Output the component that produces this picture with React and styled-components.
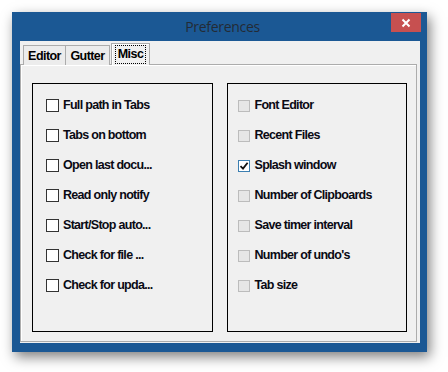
import React from 'react';
import styled, { createGlobalStyle, css } from 'styled-components';

const GlobalStyle = createGlobalStyle`
  html, body {
    margin: 0;
    padding: 0;
    background: #ffffff;
  }
  body {
    font-family: "Liberation Sans", Arial, sans-serif;
  }
`;

const Page = styled.div`
  width: 448px;
  height: 372px;
  padding: 12px 0 0 12px;
  box-sizing: border-box;
`;

const Window = styled.div`
  width: 415px;
  height: 340px;
  background: #1b5894;
  box-sizing: border-box;
  padding: 0 7px 9px 8px;
  display: flex;
  flex-direction: column;
  box-shadow: 3px 5px 12px rgba(0, 0, 0, 0.5);
`;

const TitleBar = styled.div`
  height: 29px;
  display: flex;
  align-items: flex-start;
  margin: 0 -1px 0 -2px;
`;

const Spacer = styled.div`
  width: 32px;
  margin-left: 4px;
`;

const Title = styled.div`
  flex: 1;
  text-align: center;
  font-family: "Open Sans", "Noto Sans", sans-serif;
  font-size: 14px;
  letter-spacing: -0.3px;
  color: #232b35;
  line-height: 29px;
`;

const CloseButton = styled.div`
  width: 30px;
  height: 19px;
  margin-top: 1px;
  background: #c75050;
  display: flex;
  align-items: center;
  justify-content: center;
`;

const Client = styled.div`
  flex: 1;
  background: #f0f0f0;
  display: flex;
  flex-direction: column;
  padding: 2px 3px 1px 0;
`;

const TabStrip = styled.div`
  display: flex;
  align-items: flex-end;
  padding-left: 3px;
  height: 22px;
  position: relative;
  z-index: 1;
  margin-bottom: -1px;
`;

const Tab = styled.div`
  box-sizing: border-box;
  height: 20px;
  border: 1px solid #acacac;
  border-bottom: none;
  border-left-width: ${({ first }) => (first ? 1 : 0)}px;
  background: #ececec;
  font-size: 12.5px;
  font-weight: bold;
  letter-spacing: -0.55px;
  color: #000;
  display: flex;
  align-items: center;
  justify-content: center;
  width: ${({ w }) => w}px;
  ${({ active }) =>
    active &&
    css`
      height: 22px;
      border-left-width: 1px;
      background: #f0f0f0;
      box-shadow: inset 1px 1px 0 #ffffff;
      margin-left: 1px;
      padding-bottom: 1px;
    `}
`;

const Focus = styled.span`
  border: 1px dotted #000;
  padding: 1px 2px 2px 2px;
  line-height: 14px;
`;

const Panel = styled.div`
  flex: 1;
  border: 1px solid #acacac;
  box-shadow: inset 1px 1px 0 #ffffff;
  display: flex;
  gap: 14px;
  padding: 18px 9px 9px 11px;
`;

const Group = styled.div`
  width: 181px;
  box-sizing: border-box;
  border: 1px solid #000;
  display: flex;
  flex-direction: column;
  gap: 17px;
  padding: 15px 0 0 ${({ inset }) => inset}px;
`;

const Row = styled.div`
  display: flex;
  align-items: center;
  height: 13px;
  gap: ${({ gap }) => gap}px;
`;

const Box = styled.div`
  box-sizing: border-box;
  width: ${({ size }) => size}px;
  height: ${({ size }) => size}px;
  border: 1px solid ${({ disabled }) => (disabled ? '#bcbcbc' : '#333333')};
  background: ${({ disabled }) => (disabled ? '#e6e6e6' : '#ffffff')};
  display: flex;
  align-items: center;
  justify-content: center;
  ${({ checked }) =>
    checked &&
    css`
      border-color: #3c7fb1;
      background: #ffffff;
    `}
`;

const Label = styled.span`
  font-size: 12.5px;
  font-weight: bold;
  letter-spacing: -0.7px;
  color: #0a0a14;
  line-height: 13px;
  white-space: nowrap;
`;

const left = [
  'Full path in Tabs',
  'Tabs on bottom',
  'Open last docu...',
  'Read only notify',
  'Start/Stop auto...',
  'Check for file ...',
  'Check for upda...',
];

const right = [
  ['Font Editor', false],
  ['Recent Files', false],
  ['Splash window', true],
  ['Number of Clipboards', false],
  ['Save timer interval', false],
  ["Number of undo's", false],
  ['Tab size', false],
];

function Check() {
  return (
    <svg width="10" height="10" viewBox="0 0 10 10">
      <path d="M1.5 5.2 L4 7.6 L8.6 1.8" fill="none" stroke="#111" strokeWidth="1.8" />
    </svg>
  );
}

export default function App() {
  return (
    <Page>
      <GlobalStyle />
      <Window>
        <TitleBar>
          <Spacer />
          <Title>Preferences</Title>
          <CloseButton>
            <svg width="10" height="10" viewBox="0 0 10 10">
              <path d="M1.5 1.5 L8.5 8.5 M8.5 1.5 L1.5 8.5" stroke="#fff" strokeWidth="2" />
            </svg>
          </CloseButton>
        </TitleBar>
        <Client>
          <TabStrip>
            <Tab w={43} first>Editor</Tab>
            <Tab w={44}>Gutter</Tab>
            <Tab w={39} active>
              <Focus>Misc</Focus>
            </Tab>
          </TabStrip>
          <Panel>
            <Group inset={13}>
              {left.map((t) => (
                <Row key={t} gap={4}>
                  <Box size={13} />
                  <Label>{t}</Label>
                </Row>
              ))}
            </Group>
            <Group inset={10}>
              {right.map(([t, on]) => (
                <Row key={t} gap={5}>
                  <Box size={12} disabled={!on} checked={on}>
                    {on && <Check />}
                  </Box>
                  <Label>{t}</Label>
                </Row>
              ))}
            </Group>
          </Panel>
        </Client>
      </Window>
    </Page>
  );
}
